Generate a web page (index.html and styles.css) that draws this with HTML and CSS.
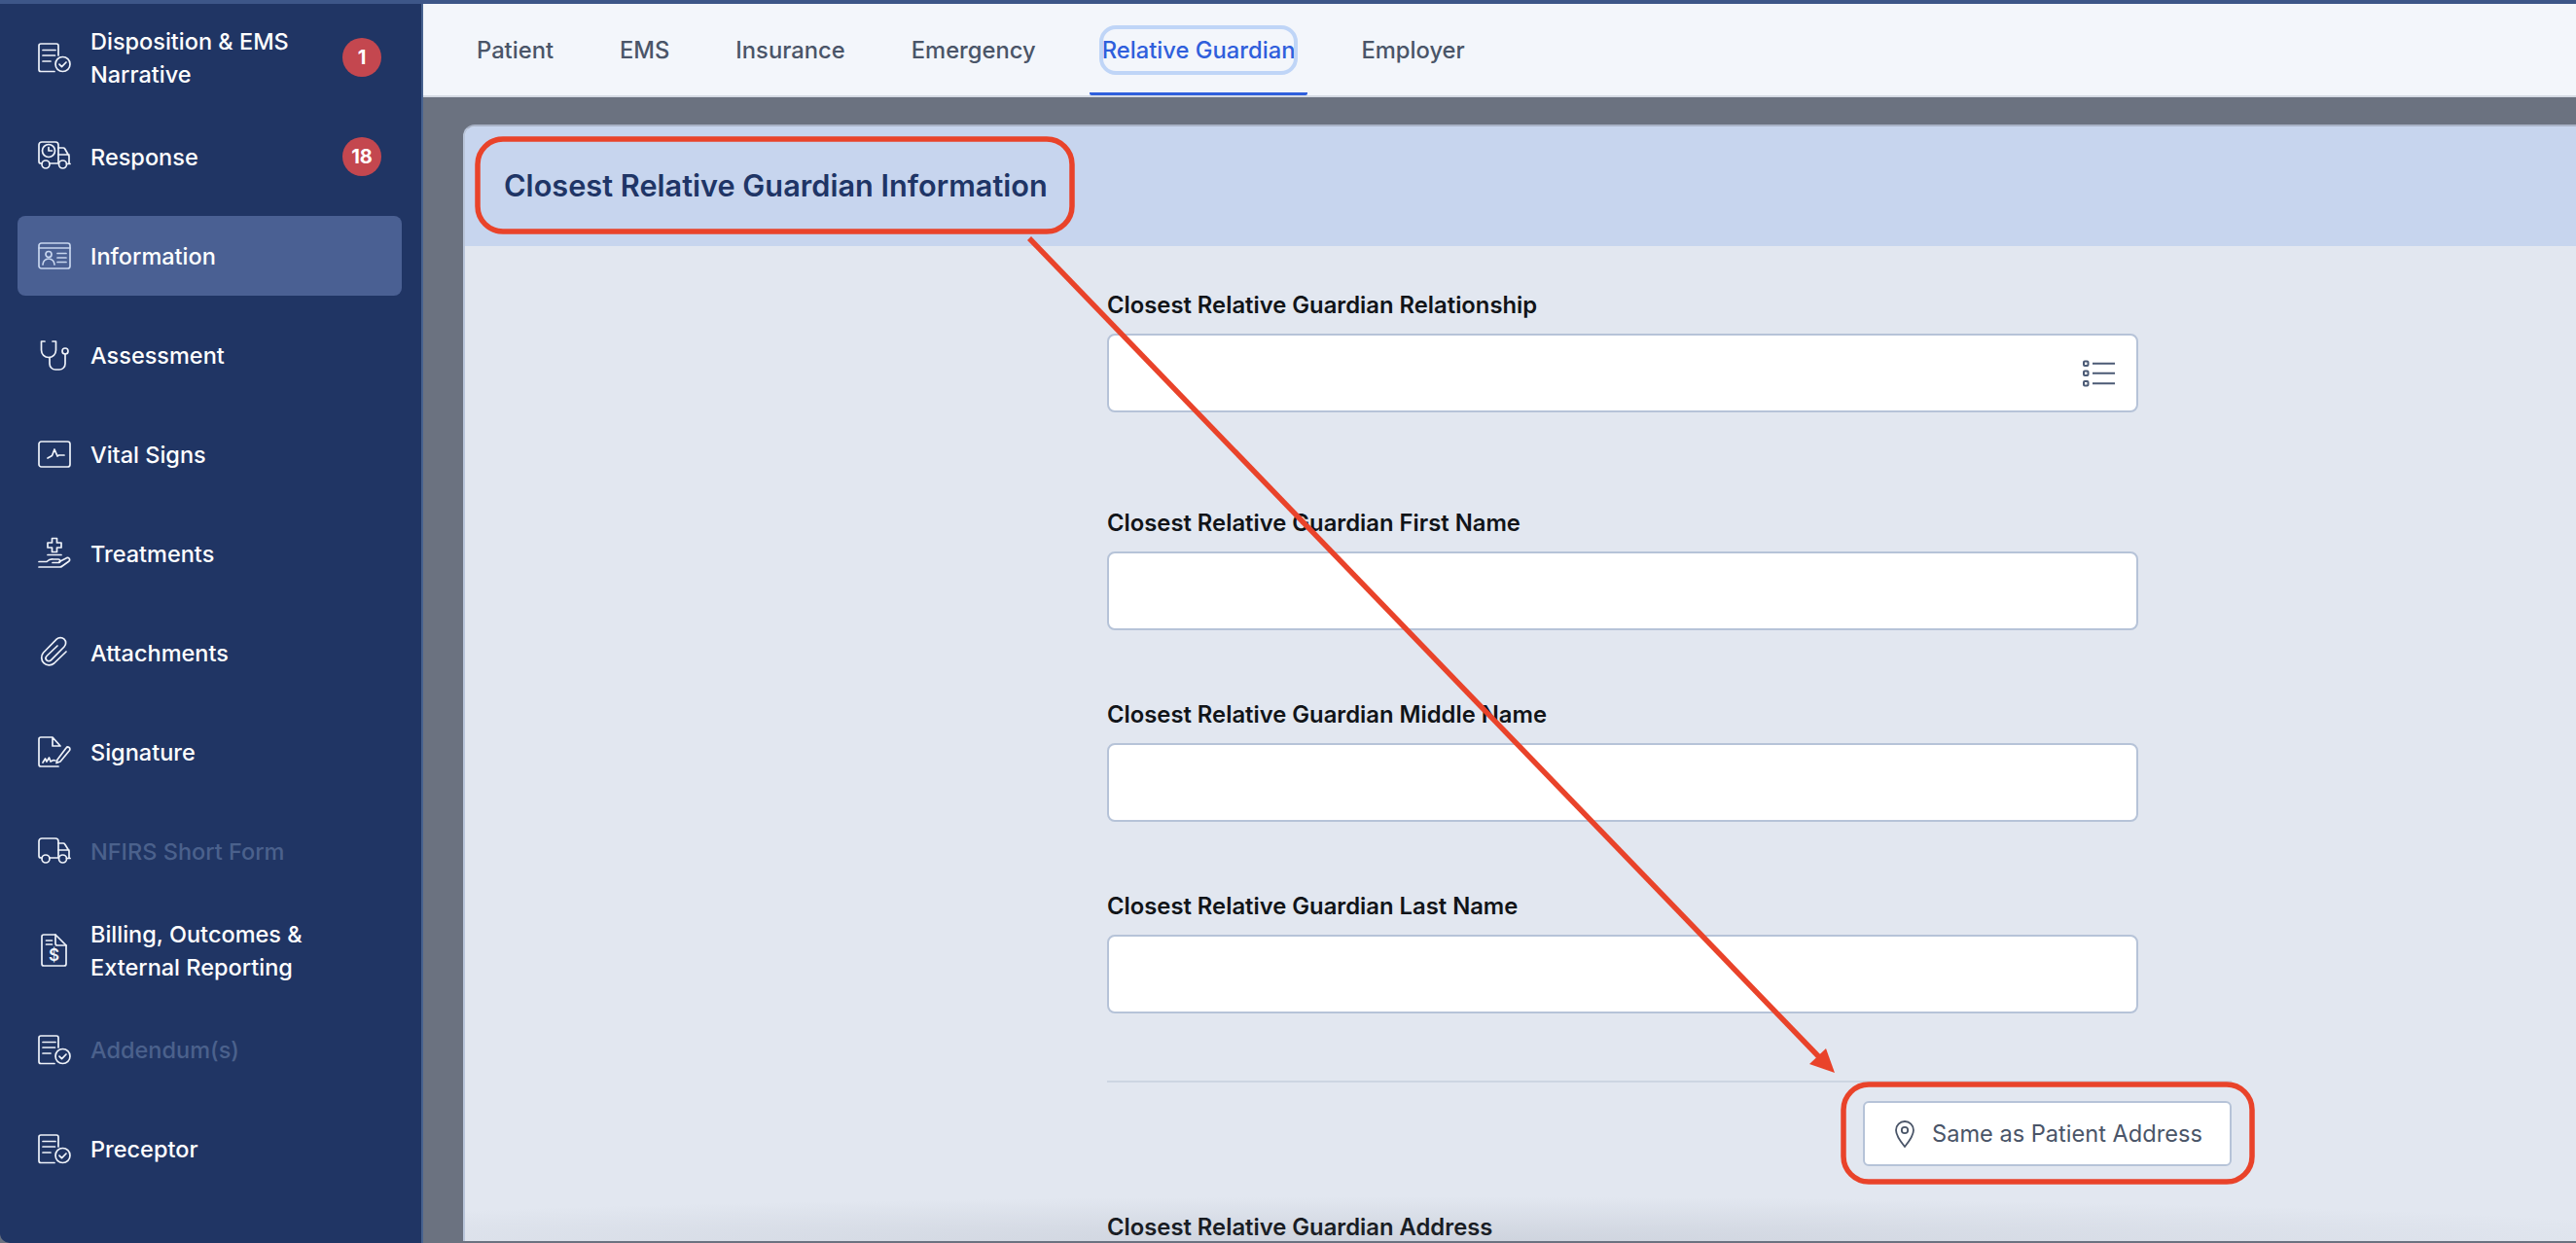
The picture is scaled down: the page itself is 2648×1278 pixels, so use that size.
FILE: index.html
```
<!DOCTYPE html>
<html lang="en">
<head>
<meta charset="utf-8">
<title>Closest Relative Guardian Information</title>
<link rel="stylesheet" href="styles.css">
</head>
<body>
<svg class="defs" width="0" height="0" aria-hidden="true">
  <symbol id="i-doc" viewBox="0 0 34 34">
    <path d="M17 31.500H3a2 2 0 0 1-2-2V5a2 2 0 0 1 2-2h16a2 2 0 0 1 2 2v10"/>
    <path d="M5 9.500h13M5 15h12.500M5 21h8"/>
    <circle cx="25.500" cy="24" r="7.500"/>
    <path d="M22 24.200l2.500 2.500 4.500-4.700"/>
  </symbol>
</svg>
<div class="topbar"></div>
<div class="app">
  <nav class="sidebar">
    <a class="nav-item">
      <svg class="nav-icon" width="34" height="34"><use href="#i-doc"/></svg>
      <span class="nav-label">Disposition &amp; EMS Narrative</span>
      <span class="badge">1</span>
    </a>
    <a class="nav-item">
      <svg class="nav-icon" width="34" height="34" viewBox="0 0 34 34">
        <path d="M4 24H3a2 2 0 0 1-2-2V5a3 3 0 0 1 3-3h14a3 3 0 0 1 3 3v19h-9"/>
        <circle cx="11" cy="11" r="6.500"/><path d="M11 7.500V11h3.500"/>
        <circle cx="8" cy="25" r="4"/><circle cx="25.500" cy="25" r="4"/>
        <path d="M21 8h5a2 2 0 0 1 1.700 1L32 16.500V24l1 .5h-3.500M21 15h11"/>
      </svg>
      <span class="nav-label">Response</span>
      <span class="badge">18</span>
    </a>
    <a class="nav-item active">
      <svg class="nav-icon" width="34" height="34" viewBox="0 0 34 34">
        <rect x="1" y="4" width="32" height="26" rx="2.500"/><path d="M1 9h32"/>
        <circle cx="11" cy="15.500" r="3"/><path d="M5 26a6 6 0 0 1 12 0"/>
        <path d="M20 14.500h9M20 19h9M20 23.500h9"/>
      </svg>
      <span class="nav-label">Information</span>
    </a>
    <a class="nav-item">
      <svg class="nav-icon" width="34" height="34" viewBox="0 0 34 34">
        <path d="M7 3H3.500v9a7.500 7.500 0 0 0 15 0V3H15"/>
        <circle cx="28" cy="13" r="3"/>
        <path d="M28 16v10a6 6 0 0 1-6 6h-4a6 6 0 0 1-6-6v-6.500"/>
      </svg>
      <span class="nav-label">Assessment</span>
    </a>
    <a class="nav-item">
      <svg class="nav-icon" width="34" height="34" viewBox="0 0 34 34">
        <rect x="1" y="4" width="32" height="26" rx="2.500"/>
        <path d="M10 21l4.500-2.500L17 12l3 7 1.500-1H27"/>
      </svg>
      <span class="nav-label">Vital Signs</span>
    </a>
    <a class="nav-item">
      <svg class="nav-icon" width="34" height="34" viewBox="0 0 34 34">
        <path d="M14.500 1.500h5V6h4.500v5h-4.500v4.500h-5V11H10V6h4.500z"/>
        <path d="M10 18.500h14"/>
        <path d="M1 25.500h8c2-2 5-3 7-2.500h5a1.500 1.500 0 0 1 0 3.500h-6"/>
        <path d="M22 25.500l7-3.500a2 2 0 0 1 3 3l-7 5a4 4 0 0 1-2.500 1H1"/>
      </svg>
      <span class="nav-label">Treatments</span>
    </a>
    <a class="nav-item">
      <svg class="nav-icon" width="34" height="34" viewBox="0 0 34 34">
        <path d="M20 10L9 20.500a3 3 0 0 0 4.300 4.300L27 11a5.500 5.500 0 0 0-7.800-7.800L5.600 17a7.800 7.800 0 0 0 11 11L29 16"/>
      </svg>
      <span class="nav-label">Attachments</span>
    </a>
    <a class="nav-item">
      <svg class="nav-icon" width="34" height="34" viewBox="0 0 34 34">
        <path d="M21 32H3a2 2 0 0 1-2-2V4a2 2 0 0 1 2-2h12l8 9h-8V2"/>
        <path d="M5 28l2.500-4 1.500 3 2.500-4 1.500 4 3-1.500 2 .5"/>
        <path d="M20 25l9-12a2 2 0 0 1 3.500 2.500L23 27l-4 1.500z"/>
      </svg>
      <span class="nav-label">Signature</span>
    </a>
    <a class="nav-item disabled">
      <svg class="nav-icon" width="34" height="34" viewBox="0 0 34 34">
        <path d="M4 24H3a2 2 0 0 1-2-2V7a3 3 0 0 1 3-3h14a3 3 0 0 1 3 3v17h-9"/>
        <circle cx="8" cy="25" r="4"/><circle cx="25.500" cy="25" r="4"/>
        <path d="M21 9h5a2 2 0 0 1 1.700 1L32 17v7l1 .5h-3.500M21 16h11"/>
      </svg>
      <span class="nav-label">NFIRS Short Form</span>
    </a>
    <a class="nav-item">
      <svg class="nav-icon" width="34" height="34" viewBox="0 0 34 34">
        <path d="M18 1H6a2 2 0 0 0-2 2v28a2 2 0 0 0 2 2h21a2 2 0 0 0 2-2V12z"/>
        <path d="M18 1v9a2 2 0 0 0 2 2h9M8.500 7h6M8.500 11h6"/>
        <text class="dollar" x="16.500" y="28">$</text>
      </svg>
      <span class="nav-label">Billing, Outcomes &amp; External Reporting</span>
    </a>
    <a class="nav-item disabled">
      <svg class="nav-icon" width="34" height="34"><use href="#i-doc"/></svg>
      <span class="nav-label">Addendum(s)</span>
    </a>
    <a class="nav-item">
      <svg class="nav-icon" width="34" height="34"><use href="#i-doc"/></svg>
      <span class="nav-label">Preceptor</span>
    </a>
  </nav>
  <main class="main">
    <div class="tabs">
      <a class="tab">Patient</a>
      <a class="tab">EMS</a>
      <a class="tab">Insurance</a>
      <a class="tab">Emergency</a>
      <a class="tab current"><span class="tab-focus">Relative Guardian</span></a>
      <a class="tab">Employer</a>
    </div>
    <section class="card">
      <header class="card-head"><h1 class="card-title">Closest Relative Guardian Information</h1></header>
      <div class="form">
        <div class="field field-first">
          <label class="field-label">Closest Relative Guardian Relationship</label>
          <div class="input">
            <svg class="list-icon" width="33" height="28" viewBox="0 0 33 28">
              <rect x="1" y="1.500" width="4.500" height="4.500" rx="1"/><rect x="1" y="11.500" width="4.500" height="4.500" rx="1"/><rect x="1" y="22" width="4.500" height="4.500" rx="1"/>
              <path d="M10 3.800h23M10 13.800h23M10 24.200h23"/>
            </svg>
          </div>
        </div>
        <div class="field">
          <label class="field-label">Closest Relative Guardian First Name</label>
          <div class="input"></div>
        </div>
        <div class="field">
          <label class="field-label">Closest Relative Guardian Middle Name</label>
          <div class="input"></div>
        </div>
        <div class="field">
          <label class="field-label">Closest Relative Guardian Last Name</label>
          <div class="input"></div>
        </div>
        <div class="divider"></div>
        <div class="btn-row">
          <button class="btn">
            <svg class="pin" width="20" height="28" viewBox="0 0 20 28">
              <path d="M10 1a9 9 0 0 0-9 9c0 6 9 17 9 17s9-11 9-17a9 9 0 0 0-9-9z"/>
              <circle cx="10" cy="10" r="3.200"/>
            </svg>
            Same as Patient Address
          </button>
        </div>
        <label class="field-label last-label">Closest Relative Guardian Address</label>
      </div>
    </section>
  </main>
</div>
<svg class="annotations" width="2648" height="1278" viewBox="0 0 2648 1278" aria-hidden="true">
  <rect class="mark" x="491" y="143" width="611" height="95" rx="26"/>
  <rect class="mark" x="1895" y="1115" width="420" height="100" rx="26"/>
  <path class="mark" d="M1058 245L1874 1091"/>
  <path class="arrowhead" d="M1886 1103L1860 1094L1877 1078z"/>
</svg>
</body>
</html>
```
FILE: styles.css
```
* { box-sizing: border-box; }
html, body { margin: 0; height: 100%; }
body {
  font-family: Inter, "Liberation Sans", sans-serif;
  background: #6b7280;
  overflow: hidden;
  display: flex;
  flex-direction: column;
  position: relative;
}
.defs { position: absolute; }
.topbar { height: 4px; background: #3d5688; flex: none; }
.app { flex: 1; display: flex; min-height: 0; }

.sidebar {
  width: 435px;
  flex: none;
  background: #203564;
  border-right: 2px solid #47628f;
  border-bottom-left-radius: 10px;
  padding: 14px 20px 0 18px;
  display: flex;
  flex-direction: column;
  gap: 20px;
}
.nav-item {
  height: 82px;
  flex: none;
  display: flex;
  align-items: center;
  gap: 20px;
  padding: 0 21px;
  color: #fff;
  font-size: 23.500px;
  line-height: 34px;
  font-weight: 500;
  border-radius: 8px;
}
.nav-item.active { background: #4a6093; }
.nav-item.active .nav-icon { color: #c7d5ee; }
.nav-item.disabled .nav-label { color: #4b618c; }
.nav-icon {
  flex: none;
  color: #eef2f9;
  fill: none;
  stroke: currentColor;
  stroke-width: 1.700;
  stroke-linecap: round;
  stroke-linejoin: round;
}
.dollar {
  font-family: Inter, sans-serif;
  font-size: 17px;
  font-weight: 600;
  text-anchor: middle;
  fill: currentColor;
  stroke: none;
}
.nav-label { flex: 1; padding-top: 1px; }
.badge {
  width: 40px;
  height: 40px;
  flex: none;
  border-radius: 50%;
  background: #c4474f;
  color: #fff;
  font-size: 20px;
  font-weight: 700;
  display: flex;
  align-items: center;
  justify-content: center;
}

.main { flex: 1; min-width: 0; display: flex; flex-direction: column; }
.tabs {
  height: 96px;
  flex: none;
  background: #f3f6fb;
  border-bottom: 2px solid #d5dae3;
  padding-left: 42px;
  display: flex;
  gap: 42px;
}
.tab {
  height: 94px;
  padding: 4px 13px 0;
  display: flex;
  align-items: center;
  color: #4a5568;
  font-size: 23.750px;
  font-weight: 500;
  border-bottom: 3px solid transparent;
}
.tab.current {
  color: #2f5fdc;
  border-bottom-color: #2f5fdc;
  border-radius: 0 0 2px 2px;
}
.tab-focus {
  display: block;
  line-height: 45px;
  border-radius: 14px;
  outline: 4px solid #bfd5f7;
  outline-offset: -1px;
}

.card {
  flex: 1;
  min-height: 0;
  margin: 28px -20px 2px 41px;
  border-top: 2px solid #a8b2c6;
  border-left: 2px solid #b9c5da;
  border-top-left-radius: 12px;
  background: #e2e7f0;
  position: relative;
}
.card::after {
  content: "";
  position: absolute;
  left: 0;
  right: 0;
  bottom: 0;
  height: 46px;
  background: radial-gradient(ellipse 62% 100% at 45% 100%, rgba(100,108,125,.16), rgba(100,108,125,0));
  pointer-events: none;
}
.card-head {
  height: 123px;
  padding: 0 0 2px 40px;
  background: #c7d5ee;
  border-top-left-radius: 10px;
  display: flex;
  align-items: center;
}
.card-title {
  margin: 0;
  font-size: 30.700px;
  font-weight: 600;
  color: #1f3566;
}
.form {
  margin-left: 660px;
  width: 1156px;
  padding-top: 46px;
}
.field { margin-bottom: 72px; }
.field-first { margin-bottom: 99px; }
.field-label {
  display: block;
  height: 28px;
  line-height: 29px;
  font-size: 23.800px;
  font-weight: 600;
  color: #111418;
}
.input {
  width: 1060px;
  height: 81px;
  margin-top: 16px;
  background: #fff;
  border: 2px solid #b6c3d8;
  border-radius: 8px;
  display: flex;
  align-items: center;
  justify-content: flex-end;
  padding-right: 22px;
}
.list-icon { fill: none; stroke: #4b5a75; stroke-width: 2; }
.divider { height: 2px; background: #cdd5e2; margin-top: -3px; }
.btn-row { display: flex; justify-content: flex-end; margin-top: 19px; }
.btn {
  width: 379px;
  height: 67px;
  background: #fff;
  border: 2px solid #b6c3d8;
  border-radius: 6px;
  padding: 0 0 0 31px;
  display: flex;
  align-items: center;
  gap: 18px;
  font-family: inherit;
  font-size: 23.600px;
  font-weight: 400;
  color: #4a5568;
}
.pin { fill: none; stroke: #4a5568; stroke-width: 1.800; flex: none; }
.last-label { margin-top: 50.500px; height: 24px; line-height: 24px; }

.annotations { position: absolute; left: 0; top: 0; pointer-events: none; }
.mark { fill: none; stroke: #e9432a; stroke-width: 5.500; }
.arrowhead { fill: #e9432a; }
```
